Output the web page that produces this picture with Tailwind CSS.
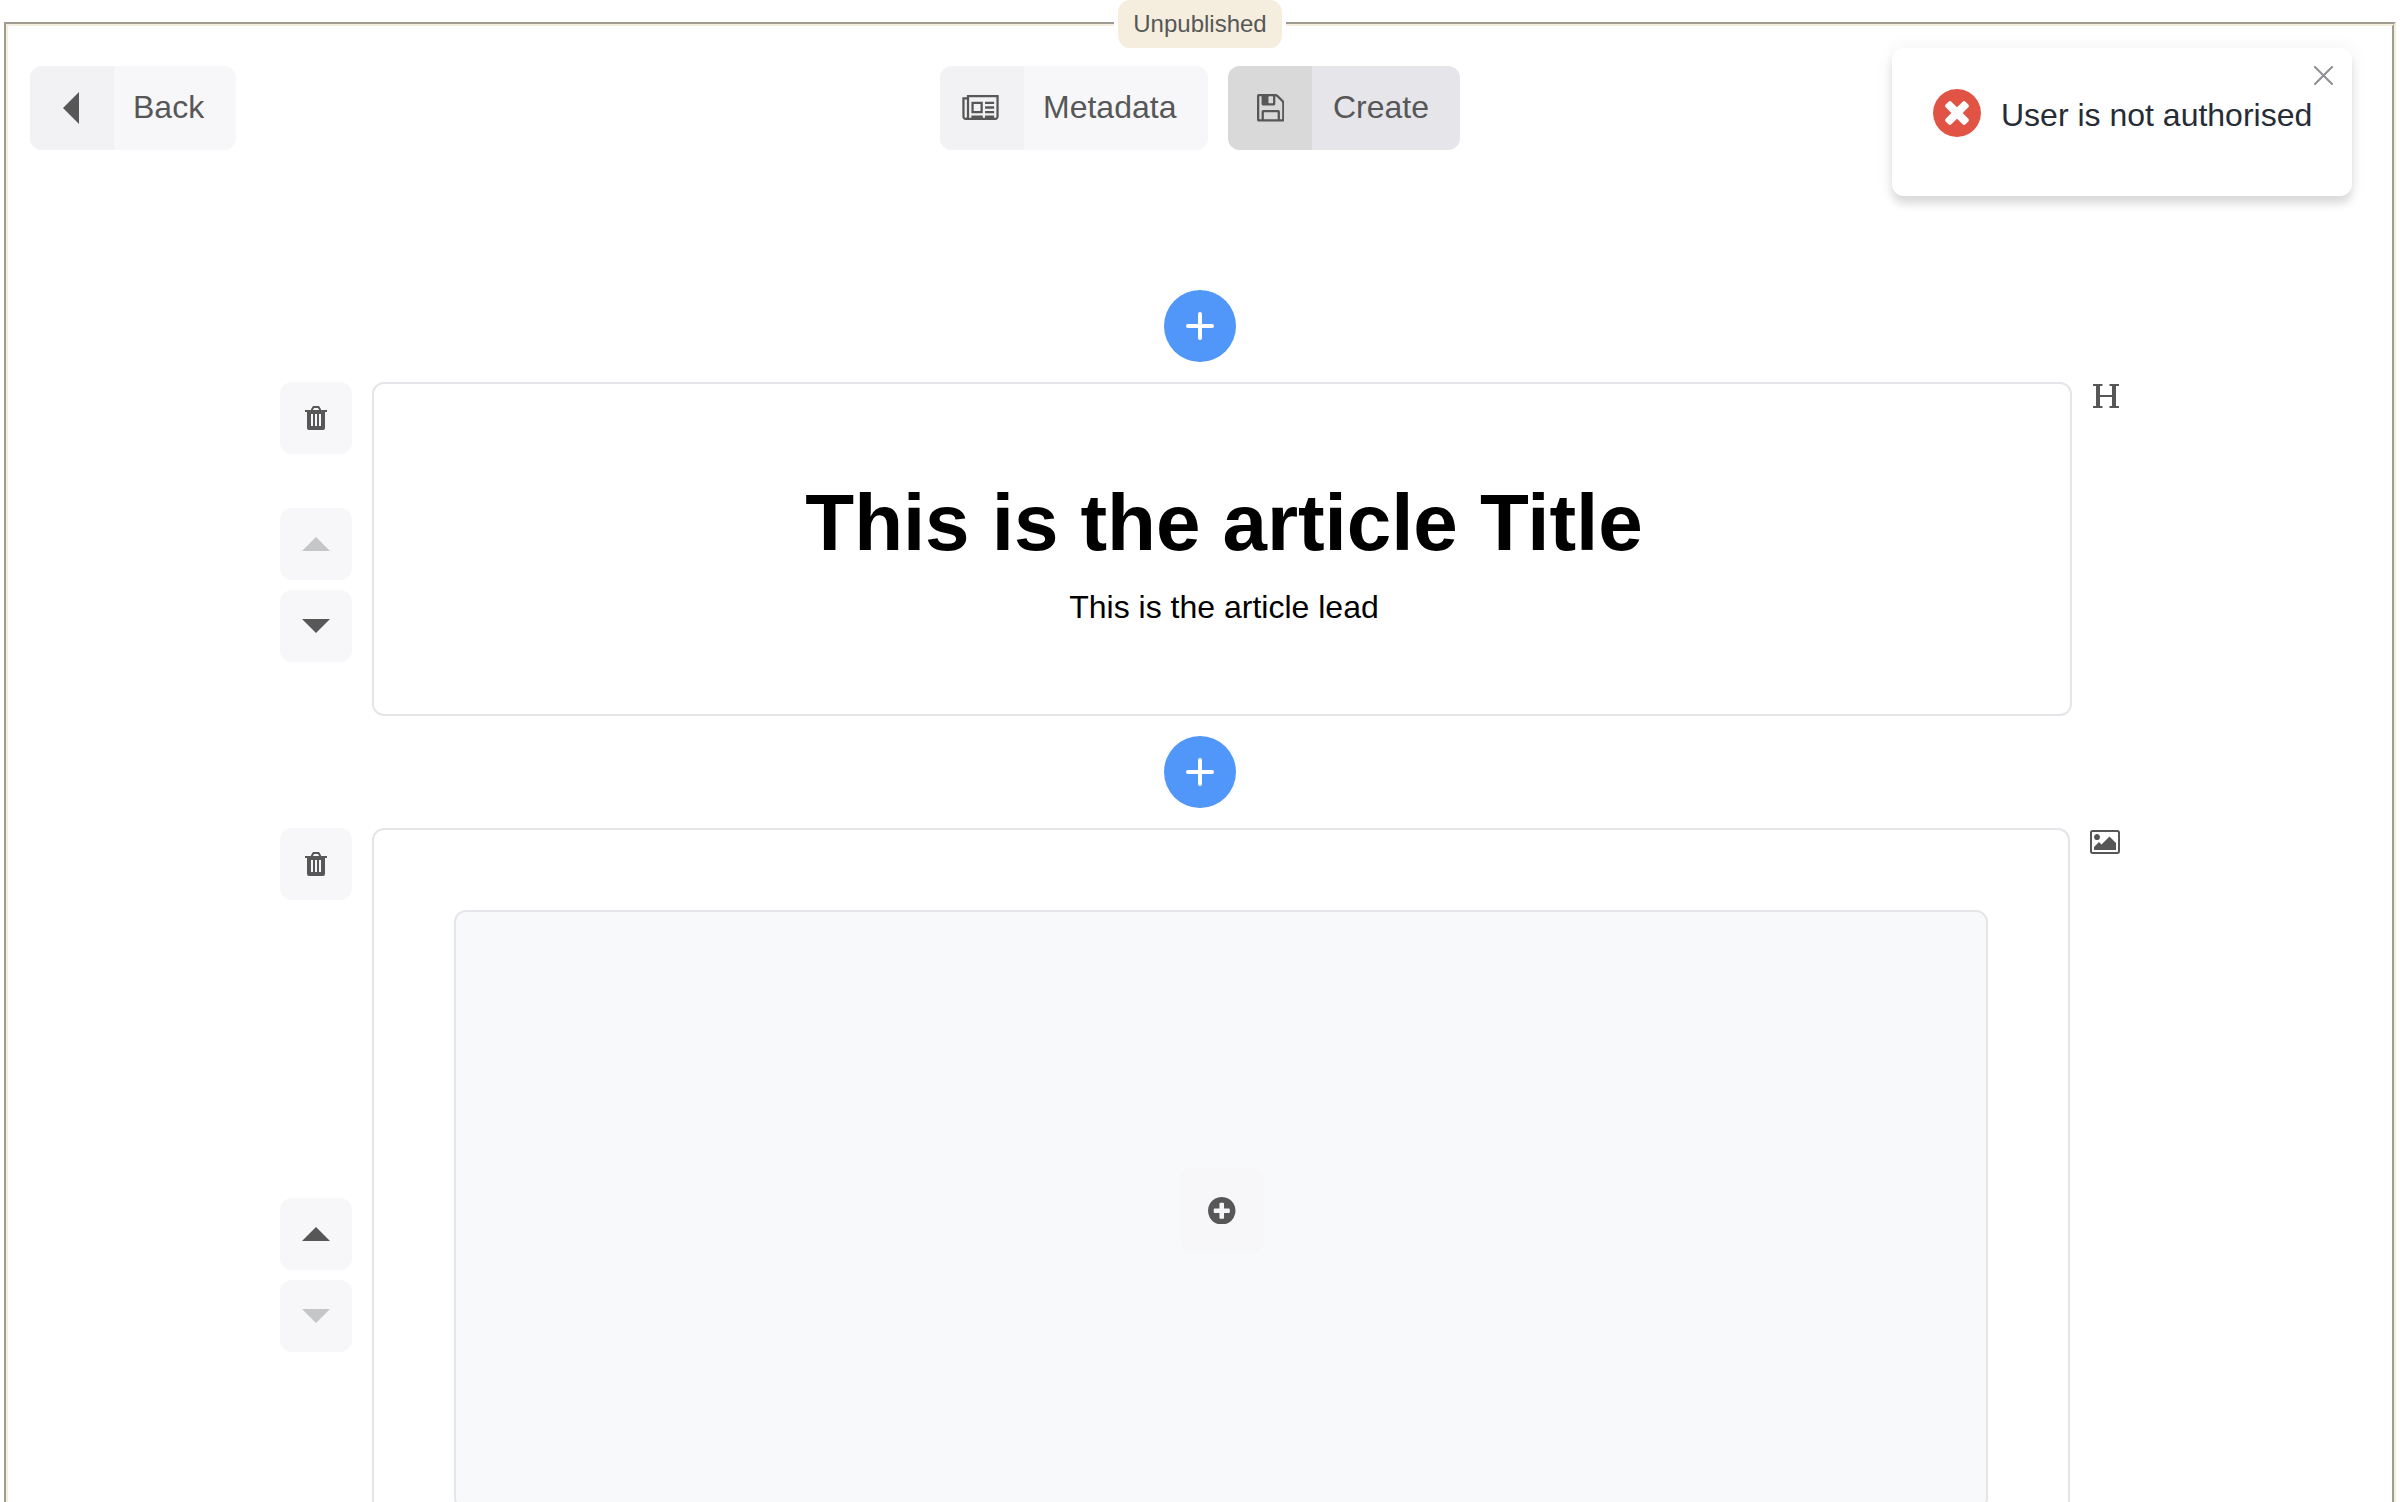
<!DOCTYPE html>
<html lang="en">
<head>
<meta charset="utf-8">
<title>Article editor</title>
<script src="https://cdn.jsdelivr.net/npm/@tailwindcss/browser@4"></script>
</head>
<body class="h-[1502px] overflow-hidden bg-white font-['Liberation_Sans',Arial,sans-serif] text-[32px] text-[#575757]">
<svg class="hidden">
  <symbol id="trash" viewBox="0 0 22 24">
    <path fill="none" stroke="currentColor" stroke-width="2" d="M7 5V3.500L8.500 1h5L15 3.500V5"/>
    <path fill="currentColor" fill-rule="evenodd" d="M0 4h22v2h-2v16q0 2-2 2H4q-2 0-2-2V6H0zM6 8v12h2V8zM10 8v12h2V8zM14 8v12h2V8z"/>
  </symbol>
  <symbol id="up" viewBox="0 0 28 14"><path fill="currentColor" d="M14 0l14 14H0z"/></symbol>
  <symbol id="down" viewBox="0 0 28 14"><path fill="currentColor" d="M0 0h28L14 14z"/></symbol>
  <symbol id="plus" viewBox="0 0 28 28"><path fill="none" stroke="currentColor" stroke-width="4" stroke-linecap="round" d="M14 2v24M2 14h24"/></symbol>
</svg>

<fieldset class="mx-1 h-[1600px] border-4 border-[#f5eede] [border-style:groove]">
  <legend class="mx-auto px-1">
    <div class="flex h-12 w-[164px] items-center justify-center rounded-xl bg-[#f5eede] text-2xl">Unpublished</div>
  </legend>

  <header class="grid grid-cols-3 px-[22px] pt-[18px]">
    <button class="flex h-[84px] w-[206px] items-center overflow-hidden rounded-xl bg-[#f7f7fa]">
      <span class="flex h-full w-[84px] items-center justify-center bg-[#f2f2f5] pr-0.5">
        <svg class="h-8 w-4" viewBox="0 0 16 32"><path fill="currentColor" d="M16 0v32L0 16z"/></svg>
      </span>
      <span class="pb-0.5 pl-[19px]">Back</span>
    </button>
    <div class="flex justify-center gap-5">
      <button class="flex h-[84px] w-[268px] shrink-0 items-center overflow-hidden rounded-xl bg-[#f7f7fa]">
        <span class="flex h-full w-[84px] items-center justify-center bg-[#f2f2f5] pr-[3px] pb-px">
          <svg class="h-[25px] w-[37px]" viewBox="0 0 2048 1408"><path fill="currentColor" d="M1024 512h-384v384h384v-384zM1152 1152v128h-640v-128h640zM1152 384v640h-640v-640h640zM1792 1152v128h-512v-128h512zM1792 896v128h-512v-128h512zM1792 640v128h-512v-128h512zM1792 384v128h-512v-128h512zM256 1216v-960h-128v960q0 26 19 45t45 19 45-19 19-45zM1920 1216v-1088h-1536v1088q0 33-11 64h1483q26 0 45-19t19-45zM2048 0v1216q0 80-56 136t-136 56h-1664q-80 0-136-56t-56-136v-1088h256v-128h1792z"/></svg>
        </span>
        <span class="pb-0.5 pl-[19px]">Metadata</span>
      </button>
      <button class="flex h-[84px] w-[232px] shrink-0 items-center overflow-hidden rounded-xl bg-[#e5e5ea]">
        <span class="flex h-full w-[84px] items-center justify-center bg-[#d9d9d9] pl-px">
          <svg class="size-[27.500px]" viewBox="0 128 1536 1536"><path fill="currentColor" d="M384 1536h768v-384h-768v384zM1280 1536h128v-896q0-14-10-38.500t-20-34.500l-281-281q-10-10-34-20t-39-10v416q0 40-28 68t-68 28h-576q-40 0-68-28t-28-68v-416h-128v1280h128v-416q0-40 28-68t68-28h832q40 0 68 28t28 68v416zM896 608v-320q0-13-9.500-22.500t-22.500-9.500h-192q-13 0-22.500 9.500t-9.500 22.500v320q0 13 9.500 22.500t22.500 9.500h192q13 0 22.500-9.500t9.500-22.500zM1536 640v928q0 40-28 68t-68 28h-1344q-40 0-68-28t-28-68v-1344q0-40 28-68t68-28h928q40 0 88 20t76 48l280 280q28 28 48 76t20 88z"/></svg>
        </span>
        <span class="pb-0.5 pl-[21px]">Create</span>
      </button>
    </div>
  </header>

  <main class="pt-[140px]">
    <button class="mx-auto mb-5 flex size-[72px] items-center justify-center rounded-full bg-[#5097f9] text-white"><svg class="size-7"><use href="#plus"/></svg></button>

    <section class="flex gap-5 pl-[272px]">
      <div class="flex w-[72px] flex-col">
        <button class="flex size-[72px] items-center justify-center rounded-xl bg-[#f7f7fa]"><svg class="h-6 w-[22px]"><use href="#trash"/></svg></button>
        <button class="mt-[54px] flex size-[72px] items-center justify-center rounded-xl bg-[#f7f7fa] text-[#c5c6c7]"><svg class="h-3.5 w-7"><use href="#up"/></svg></button>
        <button class="mt-2.5 flex size-[72px] items-center justify-center rounded-xl bg-[#f7f7fa]"><svg class="h-3.5 w-7"><use href="#down"/></svg></button>
      </div>
      <div class="h-[334px] w-[1700px] rounded-xl border-2 border-[#e5e5ea] pt-[91px] pl-1 text-center text-black">
        <h1 class="text-[80px] leading-[96px] font-bold tracking-[-0.06px]">This is the article Title</h1>
        <p class="mt-3 leading-[48px]">This is the article lead</p>
      </div>
      <svg class="mt-0.5 ml-[1px] h-6 w-[26px]" viewBox="0 0 26 24"><g fill="none" stroke="currentColor"><path stroke-width="4" d="M5 1v22M21 1v22"/><path stroke-width="2" d="M0 1h9.500M16.500 1H26M0 23h9.500M16.500 23H26M5 12h16"/></g></svg>
    </section>

    <button class="mx-auto my-5 flex size-[72px] items-center justify-center rounded-full bg-[#5097f9] text-white"><svg class="size-7"><use href="#plus"/></svg></button>

    <section class="flex gap-5 pl-[272px]">
      <div class="flex w-[72px] flex-col">
        <button class="flex size-[72px] items-center justify-center rounded-xl bg-[#f7f7fa]"><svg class="h-6 w-[22px]"><use href="#trash"/></svg></button>
        <button class="mt-[298px] flex size-[72px] items-center justify-center rounded-xl bg-[#f7f7fa]"><svg class="h-3.5 w-7"><use href="#up"/></svg></button>
        <button class="mt-2.5 flex size-[72px] items-center justify-center rounded-xl bg-[#f7f7fa] text-[#c5c6c7]"><svg class="h-3.5 w-7"><use href="#down"/></svg></button>
      </div>
      <div class="w-[1698px] rounded-xl border-2 border-[#e5e5ea] p-20">
        <div class="flex h-[600px] items-center justify-center rounded-xl border-2 border-[#e5e5ea] bg-[#f8f9fb] pl-0.5">
          <button class="flex size-[84px] items-center justify-center rounded-xl bg-[#f7f7fa]">
            <svg class="mt-px size-[27.500px]" viewBox="0 128 1536 1536"><path fill="currentColor" d="M1216 960v-128q0-26-19-45t-45-19h-256v-256q0-26-19-45t-45-19h-128q-26 0-45 19t-19 45v256h-256q-26 0-45 19t-19 45v128q0 26 19 45t45 19h256v256q0 26 19 45t45 19h128q26 0 45-19t19-45v-256h256q26 0 45-19t19-45zM1536 896q0 209-103 385.500t-279.500 279.500-385.500 103-385.500-103-279.500-279.500-103-385.500 103-385.500 279.500-279.500 385.500-103 385.500 103 279.500 279.500 103 385.500z"/></svg>
          </button>
        </div>
      </div>
      <svg class="mt-0.5 h-6 w-[30px]" viewBox="0 128 1920 1536"><path fill="currentColor" d="M640 576q0 80-56 136t-136 56-136-56-56-136 56-136 136-56 136 56 56 136zM1664 960v448h-1408v-192l320-320 160 160 512-512zM1760 256h-1600q-13 0-22.500 9.500t-9.500 22.500v1216q0 13 9.500 22.500t22.500 9.500h1600q13 0 22.500-9.500t9.500-22.500v-1216q0-13-9.500-22.500t-22.500-9.500zM1920 288v1216q0 66-47 113t-113 47h-1600q-66 0-113-47t-47-113v-1216q0-66 47-113t113-47h1600q66 0 113 47t47 113z"/></svg>
    </section>
  </main>
</fieldset>

<!-- Error notification -->
<div class="absolute top-12 right-12 flex h-[148px] w-[460px] items-start rounded-xl bg-white pt-[41px] pl-[41px] text-[#272c36] shadow-[0_8px_8px_rgba(0,0,0,0.12),0_0_20px_rgba(0,0,0,0.06)]">
  <svg class="size-12 text-[#e15344]" viewBox="0 128 1536 1536"><path fill="currentColor" d="M1149 1122q0-26-19-45l-181-181 181-181q19-19 19-45 0-27-19-46l-90-90q-19-19-46-19-26 0-45 19l-181 181-181-181q-19-19-45-19-27 0-46 19l-90 90q-19 19-19 46 0 26 19 45l181 181-181 181q-19 19-19 45 0 27 19 46l90 90q19 19 46 19 26 0 45-19l181-181 181 181q19 19 45 19 27 0 46-19l90-90q19-19 19-46zM1536 896q0 209-103 385.500t-279.500 279.500-385.500 103-385.500-103-279.500-279.500-103-385.500 103-385.500 279.500-279.500 385.500-103 385.500 103 279.500 279.500 103 385.500z"/></svg>
  <span class="pt-0.5 pl-5 leading-[48px] whitespace-nowrap">User is not authorised</span>
  <svg class="absolute top-[18px] right-[19px] size-[19px] text-[#8e8e93]" viewBox="0 0 19 19"><path fill="none" stroke="currentColor" stroke-width="2" stroke-linecap="round" d="M1 1l17 17M18 1L1 18"/></svg>
</div>
</body>
</html>
